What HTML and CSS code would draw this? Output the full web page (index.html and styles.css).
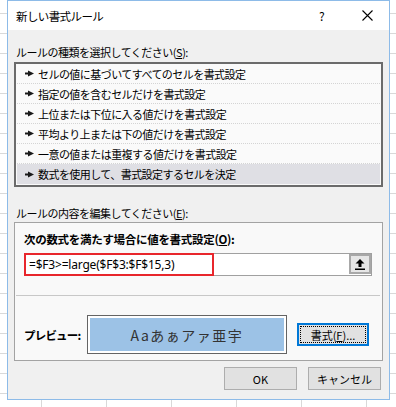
FILE: index.html
```html
<html>
<head>
    <title>新しい書式ルール</title>
    <link rel="stylesheet" href="styles.css">
</head>
<body>
<div class="window">
    <div class="titlebar">
        <span class="title">新しい書式ルール</span>
        <span class="help">?</span>
        <span class="close">
            <svg width="11" height="11" viewBox="0 0 11 11"><path d="M0.5 0.5 L10.5 10.5 M10.5 0.5 L0.5 10.5" stroke="#000" stroke-width="1.1"/></svg>
        </span>
    </div>
    <div class="content">
        <div class="label first">ルールの種類を選択してください(<u>S</u>):</div>
        <div class="rule-list">
            <div class="rule"><svg class="arrow" width="9" height="7" viewBox="0 0 9 7"><rect x="0" y="2.5" width="4" height="2"/><polygon points="3,0.5 9,3.5 3,6.5"/></svg>セルの値に基づいてすべてのセルを書式設定</div>
            <div class="rule"><svg class="arrow" width="9" height="7" viewBox="0 0 9 7"><rect x="0" y="2.5" width="4" height="2"/><polygon points="3,0.5 9,3.5 3,6.5"/></svg>指定の値を含むセルだけを書式設定</div>
            <div class="rule"><svg class="arrow" width="9" height="7" viewBox="0 0 9 7"><rect x="0" y="2.5" width="4" height="2"/><polygon points="3,0.5 9,3.5 3,6.5"/></svg>上位または下位に入る値だけを書式設定</div>
            <div class="rule"><svg class="arrow" width="9" height="7" viewBox="0 0 9 7"><rect x="0" y="2.5" width="4" height="2"/><polygon points="3,0.5 9,3.5 3,6.5"/></svg>平均より上または下の値だけを書式設定</div>
            <div class="rule"><svg class="arrow" width="9" height="7" viewBox="0 0 9 7"><rect x="0" y="2.5" width="4" height="2"/><polygon points="3,0.5 9,3.5 3,6.5"/></svg>一意の値または重複する値だけを書式設定</div>
            <div class="rule selected"><svg class="arrow" width="9" height="7" viewBox="0 0 9 7"><rect x="0" y="2.5" width="4" height="2"/><polygon points="3,0.5 9,3.5 3,6.5"/></svg>数式を使用して、書式設定するセルを決定</div>
        </div>

        <div class="label second">ルールの内容を編集してください(<u>E</u>):</div>
        <div class="group">
            <div class="bold-label">次の数式を満たす場合に値を書式設定(<u>O</u>):</div>
            <div class="formula">
                <span class="formula-text">=$F3&gt;=large($F$3:$F$15,3)</span>
                <span class="collapse">
                    <svg width="10" height="11" viewBox="0 0 10 11"><polygon points="5,0 9.5,4.5 6.5,4.5 6.5,8 3.5,8 3.5,4.5 0.5,4.5"/><rect x="0" y="9.5" width="10" height="1.5"/></svg>
                </span>
            </div>
            <hr class="sep">
            <div class="preview-row">
                <span class="preview-label">プレビュー:</span>
                <div class="preview-box"><div class="preview-fill">Aaあぁアァ亜宇</div></div>
                <button class="btn format"><span class="focus">書式(<u>F</u>)...</span></button>
            </div>
        </div>

        <div class="actions">
            <button class="btn">OK</button>
            <button class="btn">キャンセル</button>
        </div>
    </div>
</div>
</body>
</html>
```

FILE: styles.css
```css
body {
  margin: 0;
  background-color: #fff;
  background-image: linear-gradient(#d9d9d9 1px, transparent 1px),
                    linear-gradient(90deg, #d9d9d9 1px, transparent 1px);
  background-size: 65px 20px;
  background-position: 41px 13px;
  font-family: "Noto Sans CJK JP", sans-serif;
  font-size: 11px;
  color: #000;
}

.window {
  box-sizing: border-box;
  margin-left: 7px;
  width: 383px;
  height: 400px;
  border: 1px solid #8dbbe8;
  background: #f0f0f0;
}

.titlebar {
  height: 29px;
  background: #fff;
  display: flex;
  align-items: center;
  padding-left: 8px;
}

.title {
  font-size: 11.5px;
  letter-spacing: -0.6px;
  flex: 1;
}

.help {
  font-size: 12px;
  width: 20px;
  margin-right: 20px;
}

.close {
  width: 30px;
  padding-left: 3px;
  box-sizing: border-box;
  display: flex;
  align-items: center;
}

.content {
  padding: 0 6px;
}

.label {
  height: 16px;
  line-height: 16px;
  padding-left: 2px;
  letter-spacing: -0.5px;
}

.label.first {
  margin-top: 14px;
}

.label.second {
  margin-top: 18px;
}

.rule-list {
  box-sizing: border-box;
  margin-top: 2px;
  height: 125px;
  border: 2px solid #6b6b6b;
  background: #fafafa;
  padding: 0 1px 1px 1px;
}

.rule {
  box-sizing: border-box;
  height: 20px;
  display: flex;
  align-items: center;
  padding-left: 8px;
  border-bottom: 1px dotted #d4d4d4;
  letter-spacing: -0.55px;
}

.rule.selected {
  background: #dfdfe4;
  border-bottom: 0;
}

.arrow {
  fill: #1a1a1a;
  margin-right: 4px;
}

.group {
  box-sizing: border-box;
  margin-top: 1px;
  height: 139px;
  border: 1px solid #a3a3a3;
  background: #f9f9f9;
  padding: 8px 10px 6px 9px;
}

.bold-label {
  height: 16px;
  line-height: 16px;
  font-weight: bold;
  font-size: 11.5px;
  letter-spacing: -0.3px;
}

.formula {
  box-sizing: border-box;
  margin-top: 6px;
  height: 23px;
  border: 1px solid #a0a0a0;
  background: #fff;
  display: flex;
  align-items: stretch;
}

.formula-text {
  box-sizing: border-box;
  width: 190px;
  margin: -1px 0 -1px -1px;
  border: 2px solid #e8262c;
  padding-left: 3px;
  display: flex;
  align-items: center;
  font-family: "Noto Sans", sans-serif;
  font-size: 12px;
  letter-spacing: -0.2px;
}

.collapse {
  box-sizing: border-box;
  margin-left: auto;
  width: 22px;
  margin-bottom: 1px;
  border: 2px solid #a8a8a8;
  background: #e6e6e6;
  display: flex;
  align-items: center;
  justify-content: center;
}

.sep {
  margin: 19px -8px 0 -8px;
  height: 1px;
  border: 0;
  background: #c8c8c8;
}

.preview-row {
  margin-top: 19px;
  display: flex;
  align-items: center;
}

.preview-label {
  width: 63px;
  font-weight: bold;
  font-size: 11.5px;
  letter-spacing: -0.8px;
}

.preview-box {
  box-sizing: border-box;
  width: 200px;
  height: 39px;
  border: 1px solid #646464;
  padding: 2px;
  background: #fff;
}

.preview-fill {
  height: 100%;
  background: #9cc2e6;
  color: #333;
  font-size: 14px;
  letter-spacing: 1.5px;
  display: flex;
  align-items: center;
  justify-content: center;
}

.btn {
  box-sizing: border-box;
  width: 73px;
  height: 23px;
  border: 1px solid #adadad;
  background: #e1e1e1;
  font-family: "Noto Sans CJK JP", sans-serif;
  font-size: 11px;
  color: #000;
  padding: 0;
}

.btn.format {
  margin-left: 10px;
  width: 72px;
  border: 2px solid #0078d7;
  padding: 1px;
}

.focus {
  display: flex;
  align-items: center;
  justify-content: center;
  height: 100%;
  border: 1px dotted #000;
  box-sizing: border-box;
}

.actions {
  margin-top: 6px;
  display: flex;
  justify-content: flex-end;
  gap: 11px;
  padding-right: 2px;
}
```
